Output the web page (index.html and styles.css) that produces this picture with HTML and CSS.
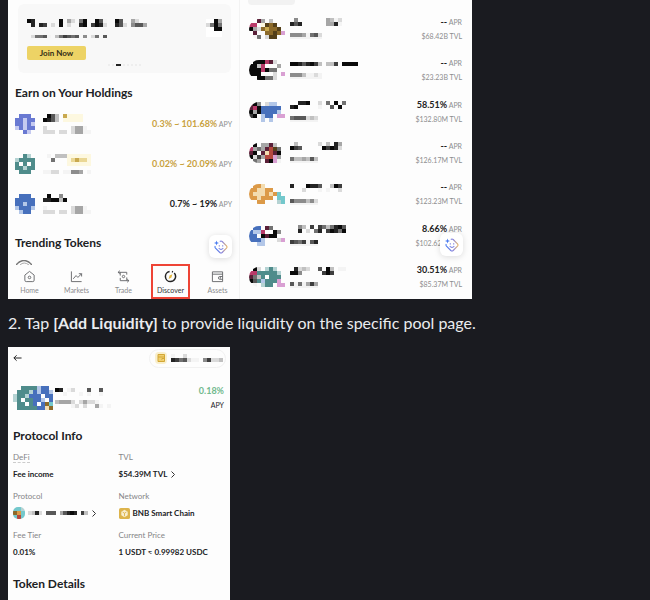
FILE: index.html
```html
<!DOCTYPE html>
<html lang="en">
<head>
<meta charset="utf-8">
<title>Add Liquidity guide</title>
<link rel="stylesheet" href="styles.css">
</head>
<body>
<svg class="defs" aria-hidden="true">
  <defs>
    <linearGradient id="tint" x1="0" y1="0" x2="1" y2="0"><stop offset="0" stop-color="#4a7cf0"/><stop offset=".6" stop-color="#8b84dc"/><stop offset="1" stop-color="#e6b566"/></linearGradient>
    <symbol id="assistant" viewBox="0 0 14 14"><path d="M5.8 1.5 Q7 .5 8.2 1.5 L12.5 5.800 Q13.500 7 12.500 8.200 L8.200 12.500 Q7 13.500 5.800 12.500 L1.500 8.200 Q.6 7 1.300 6" fill="none" stroke="url(#tint)" stroke-width="1.100"/><path d="M2.500 .5 L3.100 2.300 L5 3 L3.100 3.700 L2.500 5.500 L1.900 3.700 L0 3 L1.900 2.300Z" fill="#4a7cf0"/><path d="M5.300 5.300V6.500M8.700 5.300V6.500M4.700 8 Q7 10.800 9.300 8" fill="none" stroke="#7b82e2" stroke-width="1.100"/></symbol>
  </defs>
</svg>
<main class="article">
  <div class="shots">
    <section class="phone discover">
      <div class="banner">
        <div class="banner-top">
          <div class="banner-copy">
            <svg class="mosaic" data-rows="01......0.68.40..039..03..68..|.1.12.8.0.8..10.2018..138.5336"></svg>
            <svg class="mosaic banner-sub" data-rows="84439.742343.5.84.3"></svg>
          </div>
          <span class="banner-pic"><svg class="mosaic" data-rows="..06|8404|..00"></svg></span>
        </div>
        <button class="join" type="button">Join Now</button>
        <div class="dots"><i></i><i></i><i class="on"></i><i></i><i></i><i></i><i></i><i></i></div>
      </div>
      <h2>Earn on Your Holdings</h2>
      <ul class="earn">
        <li><svg class="mosaic" data-rows=".iii.|iiIii|iiIiI|IiIii|..iI."></svg><div class="names"><svg class="mosaic" data-rows=".037.Yyyyy..|0137.yyyyy.."></svg><svg class="mosaic" data-rows="8......8669.|888.88.86699"></svg></div><p class="rate gold"><b>0.3% ~ 101.68%</b> APY</p></li>
        <li><svg class="mosaic" data-rows="..tu.|utttt|t.t.t|ttutt|.ttt."></svg><div class="names"><svg class="mosaic" data-rows=".9.777yyyyyy|..4...yZYZZy|......yyyyyy"></svg><svg class="mosaic" data-rows="9988.99556.9"></svg></div><p class="rate gold"><b>0.02% ~ 20.09%</b> APY</p></li>
        <li><svg class="mosaic" data-rows=".bbb.|bbbbb|bbBbb|BbbbB|.Bbb."></svg><div class="names"><svg class="mosaic" data-rows=".0..5.......|110070......"></svg><svg class="mosaic" data-rows="9......8669.|888.88.86699"></svg></div><p class="rate"><b>0.7% ~ 19%</b> APY</p></li>
      </ul>
      <h2 class="trending">Trending Tokens</h2>
      <svg class="arc" viewBox="0 0 16 5"><path d="M0 5 Q8 -4 16 5" fill="none" stroke="#777" stroke-width="1.500"/><path d="M4 5 Q8 1 13 5" fill="none" stroke="#aaa"/></svg>
      <nav class="tabs">
        <a href="#home"><svg viewBox="0 0 14 14"><path d="M2 5.500 7 1.500l5 4V11q0 1.500-1.500 1.500h-7Q2 12.500 2 11z"/><circle cx="7" cy="8" r="1.400"/></svg>Home</a>
        <a href="#markets"><svg viewBox="0 0 14 14"><path d="M1.500 1.500v11h11M3.500 9.500 6.500 6l2 2 4-4M9.500 4h3v3"/></svg>Markets</a>
        <a href="#trade"><svg viewBox="0 0 14 14"><path d="M10.500 5V2.500H1M3 .8 1.200 2.500 3 4.200M3.500 8.500v3H13M11 9.800l1.800 1.700L11 13.200M3.500 2.500V6M10.500 8v3.500"/><circle cx="7" cy="7" r="1.300"/></svg>Trade</a>
        <a class="active" href="#discover"><svg viewBox="0 0 14 14"><path d="M6 1.600A5.500 5.500 0 0 0 7 12.500 5.500 5.500 0 0 0 11 3.300M8.500 1.700A5 5 0 0 1 9.600 2.200" stroke-width="1.600"/><path d="m9 4.500-1 3.700L5 9.800 6 6z" fill="#e3b83e" stroke="none"/></svg>Discover</a>
        <a href="#assets"><svg viewBox="0 0 14 14"><path d="M1.500 2h11v10.500h-11zM1.500 4.500h11M12.500 7H9.500q-1.500 0-1.500 1.500T9.500 10h3"/><circle cx="10" cy="8.500" r=".4"/></svg>Assets</a>
      </nav>
      <button class="fab" type="button" aria-label="Assistant"><svg><use href="#assistant"/></svg></button>
    </section>
    <section class="phone pools">
      <span class="chip"></span>
      <ul>
        <li><svg class="mosaic pair" data-rows="..n6.7...|pp.yGgG..|068gYggG.|.n..ggGgm|.94.8GG.."></svg><div class="names"><svg class="mosaic" data-rows=".5.......6798|131......6619"></svg><svg class="mosaic tag" data-rows="55569438"></svg></div><p class="rate"><b>--</b> APR<small>$68.42B TVL</small></p></li>
        <li><svg class="mosaic pair" data-rows=".000pn8..|007p...6.|000p044..|000...8.m|..00448.."></svg><div class="names"><svg class="mosaic" data-rows="00131027.772.0000"></svg><svg class="mosaic tag" data-rows="55579.8."></svg></div><p class="rate"><b>--</b> APR<small>$23.23B TVL</small></p></li>
        <li><svg class="mosaic pair" data-rows="n05.8BB..|np0bbbbb.|060bbbbB.|20.Bbb.mm|...B.B..."></svg><div class="names"><svg class="mosaic" data-rows="..110..8.4.0.4|10.....9..3.0."></svg><svg class="mosaic tag" data-rows="4333878"></svg></div><p class="rate"><b>58.51%</b> APR<small>$132.80M TVL</small></p></li>
        <li><svg class="mosaic pair" data-rows=".0.66n7..|p646nrG4.|n0.nOrn0.|0826rrm6.|.46.n0m9."></svg><div class="names"><svg class="mosaic" data-rows=".7.....8.7.16|023.....02018"></svg><svg class="mosaic tag" data-rows="4776737"></svg></div><p class="rate"><b>--</b> APR<small>$126.17M TVL</small></p></li>
        <li><svg class="mosaic pair" data-rows=".ooO.....|ooOOoo...|oOOOoOoc.|ooOooo.cc|..oo...uc"></svg><div class="names"><svg class="mosaic" data-rows="1...0113..702|...8...9.9..8"></svg><svg class="mosaic tag" data-rows="3555758"></svg></div><p class="rate"><b>--</b> APR<small>$123.23M TVL</small></p></li>
        <li><svg class="mosaic pair" data-rows=".bb.n4...|bBBp..05.|bb.0n00..|bbbB...8m|..BB....."></svg><div class="names"><svg class="mosaic" data-rows="..57.2.2474103|..1.8.41.20140"></svg><svg class="mosaic tag" data-rows="2342.31"></svg></div><p class="rate"><b>8.66%</b> APR<small>$102.62M TVL</small></p></li>
        <li><svg class="mosaic pair" data-rows=".08.utu..|pptttttu.|n47t.ttt.|03tBtttm.|.9.utt.mm"></svg><div class="names"><svg class="mosaic" data-rows=".1878..3.07.99|005.....202..."></svg><svg class="mosaic tag" data-rows="3.4.626"></svg></div><p class="rate"><b>30.51%</b> APR<small>$85.37M TVL</small></p></li>
      </ul>
      <button class="fab" type="button" aria-label="Assistant"><svg><use href="#assistant"/></svg></button>
    </section>
  </div>
  <p class="step">2. Tap <strong>[Add Liquidity]</strong> to provide liquidity on the specific pool page.</p>
  <section class="phone pool">
    <header>
      <button class="back" type="button" aria-label="Back"><svg viewBox="0 0 10 8"><path d="M9.500 4H1M4 1 1 4l3 3" fill="none" stroke="#222" stroke-width="1.100"/></svg></button>
      <div class="wallet"><svg class="wallet-icon" viewBox="0 0 12 12"><rect width="12" height="12" rx="4" fill="#f9efcc"/><path d="M3 2.500h6.500V9.500H3zM3 5h6.500M9.500 6.500H7V8" fill="#f0cf70" stroke="#d3a735"/></svg><svg class="mosaic" data-rows="9..8.........|1243899.52887"></svg></div>
    </header>
    <div class="summary">
      <svg class="mosaic" data-rows="..ttttBbb.|.tttubBbbB|uttubbb.bb|ut.ttbbB.b|.tt.tb.bgc|.tttttbbOg"></svg>
      <div class="names"><svg class="mosaic" data-rows="01.98...3..3..|..9...9.9..9.."></svg><svg class="mosaic" data-rows="76668.86889...|....98.8..69.9"></svg></div>
      <p class="apy"><b>0.18%</b>APY</p>
    </div>
    <h2>Protocol Info</h2>
    <dl class="info">
      <div><dt><span class="hint">DeFi</span></dt><dd>Fee income</dd></div>
      <div><dt>TVL</dt><dd>$54.39M TVL <svg class="chev" viewBox="0 0 4 7"><path d="m.5.5 3 3-3 3"/></svg></dd></div>
      <div><dt>Protocol</dt><dd><svg class="mosaic token" data-rows="ccu|goc|crc"></svg><svg class="mosaic protocol" data-rows="8718.333.63101.27"></svg><svg class="chev" viewBox="0 0 4 7"><path d="m.5.5 3 3-3 3"/></svg></dd></div>
      <div><dt>Network</dt><dd><svg class="bnb" viewBox="0 0 12 12"><rect width="12" height="12" rx="2" fill="#ddb44c"/><path d="M6 2 9.500 4v4L6 10 2.500 8V4z" fill="#f8eed0"/><path d="M4 4.500 6 5.700l2-1.200M6 5.700V9" fill="none" stroke="#ddb44c"/></svg>BNB Smart Chain</dd></div>
      <div><dt>Fee Tier</dt><dd>0.01%</dd></div>
      <div><dt>Current Price</dt><dd>1 USDT ≈ 0.99982 USDC</dd></div>
    </dl>
    <h2>Token Details</h2>
  </section>
</main>
<script src="mosaic.js"></script>
</body>
</html>
```
FILE: styles.css
```css
* { box-sizing: border-box; }
body { margin: 0; background: #1a1b20; color: #eaecef; font-family: Lato, "Open Sans", sans-serif; }
ul, dl, dd, p, h2 { margin: 0; padding: 0; list-style: none; }
button { border: 0; padding: 0; font: inherit; }
svg { display: block; flex: none; }
.defs { position: absolute; width: 0; height: 0; }
.article { min-height: 100vh; padding: 0 8px; display: flex; flex-direction: column; align-items: flex-start; }
.shots { display: grid; grid-template-columns: 1fr 1fr; width: 100%; max-width: 464px; background: #fdfdfd; }
.phone { position: relative; background: #fdfdfd; color: #202124; font-size: 8px; display: flex; flex-direction: column; }
h2 { font-size: 12px; line-height: 16px; font-weight: 700; }

.discover { border-right: 1px solid #f3f3f3; }
.banner { margin: 4px 8px 0 10px; padding: 15px 9px 6px 9px; border-radius: 6px; background: #f8f8f8; }
.banner-top { display: flex; justify-content: space-between; height: 27px; }
.banner-sub { margin: 8px 0 0 4px; height: 3px; }
.banner-pic { background: #fff; height: 18px; }
.join { display: block; width: 59px; height: 14px; border-radius: 2px; background: #edd365; color: #322c16; font-weight: 700; line-height: 14px; }
.dots { display: flex; justify-content: center; gap: 2px; margin-top: 4px; padding-bottom: 1px; }
.dots i { width: 2px; height: 2px; background: #eee; }
.dots .on { width: 5px; background: #222; }
.discover h2 { margin: 12px 7px 3px; }
.earn li { display: flex; align-items: center; gap: 8px; height: 40px; padding: 0 7px; }
.names { display: flex; flex-direction: column; gap: 4px; }
.rate { margin-left: auto; color: #8d8d8f; font-size: 7px; line-height: 12px; text-align: right; white-space: nowrap; }
.rate b { color: #222; font-size: 9px; }
.rate.gold b { color: #c9a23f; }
.discover .trending { margin: 11px 7px 9px; }
.arc { width: 16px; height: 5px; margin-left: 8px; }
.tabs { display: grid; grid-template-columns: repeat(5, 1fr); margin: 0 -2px; padding: 0 0 1px; }
.tabs a { display: flex; flex-direction: column; align-items: center; gap: 3px; height: 33px; padding: 5px 0 0; margin: 0 5px; color: #8c8c8e; font-size: 7px; line-height: 8px; text-decoration: none; }
.tabs svg { width: 13px; height: 13px; fill: none; stroke: #66676a; stroke-width: 1; }
.tabs .active { color: #333; outline: 2px solid #ee4436; outline-offset: -1px; }
.tabs .active svg { stroke: #222; }
.fab { position: absolute; right: 7px; bottom: 41px; display: grid; place-items: center; width: 23px; height: 23px; border-radius: 6px; background: #fff; box-shadow: 0 1px 6px #0002; }
.fab svg { width: 14px; height: 14px; }

.chip { width: 47px; height: 5px; margin-left: 8px; border-radius: 0 0 4px 4px; background: #f2f2f2; }
.pools ul { flex: 1; display: grid; grid-template-rows: repeat(7, 1fr); padding: 3px 10px 1px 9px; }
.pools li { display: flex; align-items: center; }
.pair { border-radius: 10px 0 0 10px; margin-right: 5px; }
.pools .names { gap: 7px; align-items: flex-start; }
.tag { box-sizing: content-box; padding-bottom: 2px; background: #f3f3f3; }
.pools .rate { line-height: 14px; }
.rate small { display: block; font-size: 7px; }
.pools .fab { bottom: 43px; right: 9px; }

.step { margin: 12px 0 13px; font-size: 16px; line-height: 23px; }

.pool { flex: 1; width: 100%; max-width: 222px; overflow: hidden; padding: 0 6px 0 5px; }
.pool header { display: flex; justify-content: space-between; align-items: center; height: 22px; }
.back { background: none; }
.back svg { width: 9px; height: 8px; }
.wallet { display: flex; align-items: center; gap: 4px; height: 19px; margin-right: -2px; padding: 0 2px 0 5px; border: 1px solid #f1f1f1; border-radius: 10px; }
.wallet-icon { width: 12px; height: 12px; }
.summary { display: flex; align-items: center; gap: 2px; margin: 15px 0 16px; }
.summary .names { gap: 4px; }
.apy { margin-left: auto; text-align: right; font-size: 7px; line-height: 14px; }
.apy b { display: block; color: #72b98d; font-size: 9px; }
.info { display: grid; grid-template-columns: 1fr 1fr; margin: 6px 0 16px; row-gap: 7px; }
.info dt { color: #858588; line-height: 14px; }
.hint { border-bottom: 1px dashed #ccc; }
.info dd { display: flex; align-items: center; gap: 3px; height: 18px; padding-top: 2px; font-weight: 700; white-space: nowrap; }
.chev { width: 4px; height: 7px; margin-left: 1px; fill: none; stroke: #333; }
.bnb { width: 11px; height: 11px; }
.token { border-radius: 5px; }
.protocol { width: 60px; }
```
FILE: mosaic.js
```js
// Draws the masked names and avatars as blocks, one character per block.
const colours = {
  b: '#4770bc', B: '#b3c7e8', i: '#6979d2', I: '#c5caf0', t: '#4f8c8b', u: '#b5d3d3',
  p: '#b93a69', n: '#5a2038', m: '#d9a0d3', g: '#8c6a2a', G: '#54401a', y: '#fdf8e0',
  Y: '#c9a94f', Z: '#ead795', o: '#dc9a48', O: '#f3dcb0', c: '#74c8cc', r: '#b5483f'
};
const size = 4;
document.querySelectorAll('.mosaic').forEach(svg => {
  const rows = svg.dataset.rows.split('|');
  svg.setAttribute('width', rows[0].length * size);
  svg.setAttribute('height', rows.length * size);
  svg.setAttribute('viewBox', `0 0 ${rows[0].length} ${rows.length}`);
  svg.setAttribute('preserveAspectRatio', 'none');
  svg.setAttribute('shape-rendering', 'crispEdges');
  svg.setAttribute('aria-hidden', 'true');
  rows.forEach((row, y) => [...row].forEach((ch, x) => {
    if (ch === '.') return;
    const r = document.createElementNS('http://www.w3.org/2000/svg', 'rect');
    const grey = ch * 26 + 10;
    r.setAttribute('x', x);
    r.setAttribute('y', y);
    r.setAttribute('width', 1);
    r.setAttribute('height', 1);
    r.setAttribute('fill', colours[ch] || `rgb(${grey},${grey},${grey})`);
    svg.append(r);
  }));
});
```
